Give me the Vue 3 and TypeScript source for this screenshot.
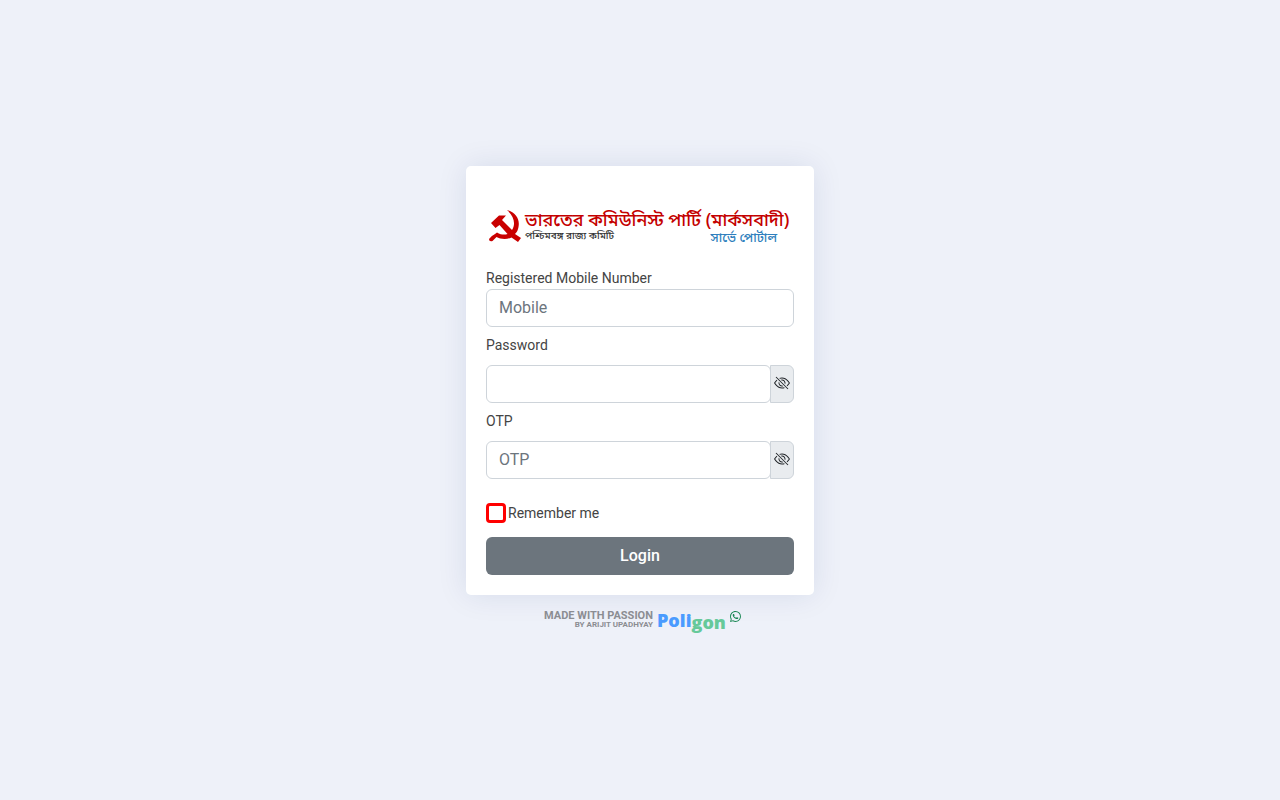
<script setup lang="ts">
import { ref } from 'vue'

const mobile = ref('')
const password = ref('')
const otp = ref('')
const remember = ref(false)
const showPassword = ref(false)
const showOtp = ref(false)
</script>

<template>
  <main class="page">
    <form class="card" @submit.prevent>
      <header class="brand">
        <svg class="emblem" viewBox="0 0 32 32" aria-hidden="true">
          <path d="M18 0C27 3 31 9 29.500 17C29 20 28 22 26 24L32 28L29 32L22.500 27.500C17 30 11 29 7.500 27L3.500 31Q0 32 0 29Q2 26 6 24L8 22.500C12 25 16 25 18.500 24L10.500 15L6.500 18L2 13L10 5.500L17 5.500L13 10L23 20C27 14 25 6 18 0Z" />
        </svg>
        <div class="brand-text">
          <div class="party">ভারতের কমিউনিস্ট পার্টি (মার্কসবাদী)</div>
          <div class="subline">
            <span class="state">পশ্চিমবঙ্গ রাজ্য কমিটি</span>
            <span class="portal">সার্ভে পোর্টাল</span>
          </div>
        </div>
      </header>

      <label class="label" for="mobile">Registered Mobile Number</label>
      <input id="mobile" v-model="mobile" class="control" type="text" placeholder="Mobile" />

      <label class="label spaced" for="password">Password</label>
      <div class="group">
        <input id="password" v-model="password" class="control" :type="showPassword ? 'text' : 'password'" />
        <button class="toggle" type="button" aria-label="Show password" @click="showPassword = !showPassword">
          <svg viewBox="0 0 16 16" aria-hidden="true">
            <path d="M13.359 11.238C15.06 9.72 16 8 16 8s-3-5.5-8-5.5a7.028 7.028 0 0 0-2.79.588l.77.771A5.944 5.944 0 0 1 8 3.5c2.12 0 3.879 1.168 5.168 2.457A13.134 13.134 0 0 1 14.828 8c-.058.087-.122.183-.195.288-.335.48-.83 1.12-1.465 1.755-.165.165-.337.328-.517.486l.708.709z" />
            <path d="M11.297 9.176a3.5 3.5 0 0 0-4.474-4.474l.823.823a2.5 2.5 0 0 1 2.829 2.829l.822.822zm-2.943 1.299.822.822a3.5 3.5 0 0 1-4.474-4.474l.823.823a2.5 2.5 0 0 0 2.829 2.829z" />
            <path d="M3.35 5.47c-.18.16-.353.322-.518.487A13.134 13.134 0 0 0 1.172 8l.195.288c.335.48.83 1.12 1.465 1.755C4.121 11.332 5.881 12.5 8 12.5c.716 0 1.39-.133 2.02-.36l.77.772A7.029 7.029 0 0 1 8 13.5C3 13.5 0 8 0 8s.939-1.721 2.641-3.238l.708.709zm10.296 8.884-12-12 .708-.708 12 12-.708.708z" />
          </svg>
        </button>
      </div>

      <label class="label spaced" for="otp">OTP</label>
      <div class="group">
        <input id="otp" v-model="otp" class="control" :type="showOtp ? 'text' : 'password'" placeholder="OTP" />
        <button class="toggle" type="button" aria-label="Show OTP" @click="showOtp = !showOtp">
          <svg viewBox="0 0 16 16" aria-hidden="true">
            <path d="M13.359 11.238C15.06 9.72 16 8 16 8s-3-5.5-8-5.5a7.028 7.028 0 0 0-2.79.588l.77.771A5.944 5.944 0 0 1 8 3.5c2.12 0 3.879 1.168 5.168 2.457A13.134 13.134 0 0 1 14.828 8c-.058.087-.122.183-.195.288-.335.48-.83 1.12-1.465 1.755-.165.165-.337.328-.517.486l.708.709z" />
            <path d="M11.297 9.176a3.5 3.5 0 0 0-4.474-4.474l.823.823a2.5 2.5 0 0 1 2.829 2.829l.822.822zm-2.943 1.299.822.822a3.5 3.5 0 0 1-4.474-4.474l.823.823a2.5 2.5 0 0 0 2.829 2.829z" />
            <path d="M3.35 5.47c-.18.16-.353.322-.518.487A13.134 13.134 0 0 0 1.172 8l.195.288c.335.48.83 1.12 1.465 1.755C4.121 11.332 5.881 12.5 8 12.5c.716 0 1.39-.133 2.02-.36l.77.772A7.029 7.029 0 0 1 8 13.5C3 13.5 0 8 0 8s.939-1.721 2.641-3.238l.708.709zm10.296 8.884-12-12 .708-.708 12 12-.708.708z" />
          </svg>
        </button>
      </div>

      <div class="remember">
        <input id="remember" v-model="remember" type="checkbox" />
        <label for="remember">Remember me</label>
      </div>

      <button class="submit" type="submit">Login</button>
    </form>

    <footer class="credit">
      <div class="made">
        <div class="passion">MADE WITH PASSION</div>
        <div class="author">BY ARIJIT UPADHYAY</div>
      </div>
      <div class="poligon"><span class="poli">Poli</span><span class="gon">gon</span></div>
      <a class="whatsapp" href="#" aria-label="WhatsApp">
        <svg viewBox="0 0 16 16" aria-hidden="true">
          <path d="M13.601 2.326A7.854 7.854 0 0 0 7.994 0C3.627 0 .068 3.558.064 7.926c0 1.399.366 2.76 1.057 3.965L0 16l4.204-1.102a7.933 7.933 0 0 0 3.79.965h.004c4.368 0 7.926-3.558 7.93-7.93A7.898 7.898 0 0 0 13.6 2.326zM7.994 14.521a6.573 6.573 0 0 1-3.356-.92l-.24-.144-2.494.654.666-2.433-.156-.251a6.56 6.56 0 0 1-1.007-3.505c0-3.626 2.957-6.584 6.591-6.584a6.56 6.56 0 0 1 4.66 1.931 6.557 6.557 0 0 1 1.928 4.66c-.004 3.639-2.961 6.592-6.592 6.592zm3.615-4.934c-.197-.099-1.17-.578-1.353-.646-.182-.065-.315-.099-.445.099-.133.197-.513.646-.627.775-.114.133-.232.148-.43.05-.197-.1-.836-.308-1.592-.985-.59-.525-.985-1.175-1.103-1.372-.114-.198-.011-.304.088-.403.087-.088.197-.232.296-.346.1-.114.133-.198.198-.33.065-.134.034-.248-.015-.347-.05-.099-.445-1.076-.612-1.47-.16-.389-.323-.335-.445-.34-.114-.007-.247-.007-.38-.007a.729.729 0 0 0-.529.247c-.182.198-.691.677-.691 1.654 0 .977.71 1.916.81 2.049.098.133 1.394 2.132 3.383 2.992.47.205.84.326 1.129.418.475.152.904.129 1.246.08.38-.058 1.171-.48 1.338-.943.164-.464.164-.86.114-.943-.049-.084-.182-.133-.38-.232z" />
        </svg>
      </a>
    </footer>
  </main>
</template>

<style>
body {
  margin: 0;
  background: #eef1f9;
}
</style>

<style scoped>
.page {
  box-sizing: border-box;
  min-height: 100vh;
  display: flex;
  flex-direction: column;
  align-items: center;
  justify-content: center;
  font-family: Roboto, "Liberation Sans", sans-serif;
  font-size: 14px;
  line-height: 21px;
  color: #444;
}
.card {
  box-sizing: border-box;
  width: 100%;
  max-width: 348px;
  padding: 20px;
  display: flex;
  flex-direction: column;
  background: #fff;
  border-radius: 5px;
  box-shadow: 0 0 30px rgba(1, 41, 112, 0.1);
}
.brand {
  display: flex;
  align-items: flex-start;
  gap: 4px;
  padding: 24px 3px 22px;
  font-family: "Noto Sans Bengali", "Noto Serif Bengali", "Lohit Bengali", "Noto Sans", serif;
  white-space: nowrap;
}
.emblem {
  width: 32px;
  height: 32px;
  flex: none;
  fill: #c90000;
}
.brand-text {
  flex: 1;
  min-width: 0;
}
.party {
  font-size: 18px;
  line-height: 22px;
  font-weight: 500;
  color: #c40000;
}
.subline {
  display: flex;
  align-items: flex-start;
  justify-content: space-between;
  padding-right: 14px;
  line-height: 14px;
}
.state {
  font-size: 10px;
  line-height: 10px;
  font-weight: 500;
  color: #333;
}
.portal {
  font-size: 13px;
  font-weight: 500;
  color: #2f7fbd;
}
.spaced {
  margin: 8px 0 9px;
}
.control {
  box-sizing: border-box;
  width: 100%;
  min-width: 0;
  height: 38px;
  padding: 5px 12px 7px;
  border: 1px solid #ced4da;
  border-radius: 6px;
  background: #fff;
  color: #212529;
  font: 16px/24px Roboto, "Liberation Sans", sans-serif;
}
.control::placeholder {
  color: #6c757d;
  opacity: 1;
}
.group {
  display: flex;
}
.toggle {
  box-sizing: border-box;
  flex: none;
  width: 24px;
  margin-left: -1px;
  padding: 0 0 2px;
  display: flex;
  align-items: center;
  justify-content: center;
  border: 1px solid #ced4da;
  border-radius: 0 6px 6px 0;
  background: #e9ecef;
}
.toggle svg {
  width: 16px;
  height: 16px;
  fill: #212529;
}
.remember {
  display: flex;
  align-items: center;
  gap: 2px;
  margin: 24px 0 14px;
  line-height: 20px;
}
.remember input {
  appearance: none;
  box-sizing: border-box;
  width: 20px;
  height: 20px;
  margin: 0;
  border: 3px solid #f00;
  border-radius: 4px;
  background: #fff;
}
.remember input:checked {
  background: #f00;
}
.submit {
  height: 38px;
  padding: 0;
  border: 0;
  border-radius: 6px;
  background: #6c757d;
  color: #fff;
  font: 500 16px/24px Roboto, "Liberation Sans", sans-serif;
}
.credit {
  display: flex;
  align-items: flex-start;
  gap: 4px;
  height: 23px;
  padding: 16px 0 0 5px;
}
.made {
  text-align: right;
  font-family: Roboto, "Liberation Sans", sans-serif;
  font-weight: 700;
  color: #8b8d92;
}
.passion {
  font-size: 11px;
  line-height: 10px;
}
.author {
  font-size: 8px;
  line-height: 8px;
}
.poligon {
  display: flex;
  font: 800 18px/18px "Open Sans", sans-serif;
}
.poli {
  color: #4a9bff;
}
.gon {
  padding-top: 2px;
  color: #66c99a;
}
.whatsapp svg {
  display: block;
  width: 11px;
  height: 11px;
  fill: #198754;
}
</style>
